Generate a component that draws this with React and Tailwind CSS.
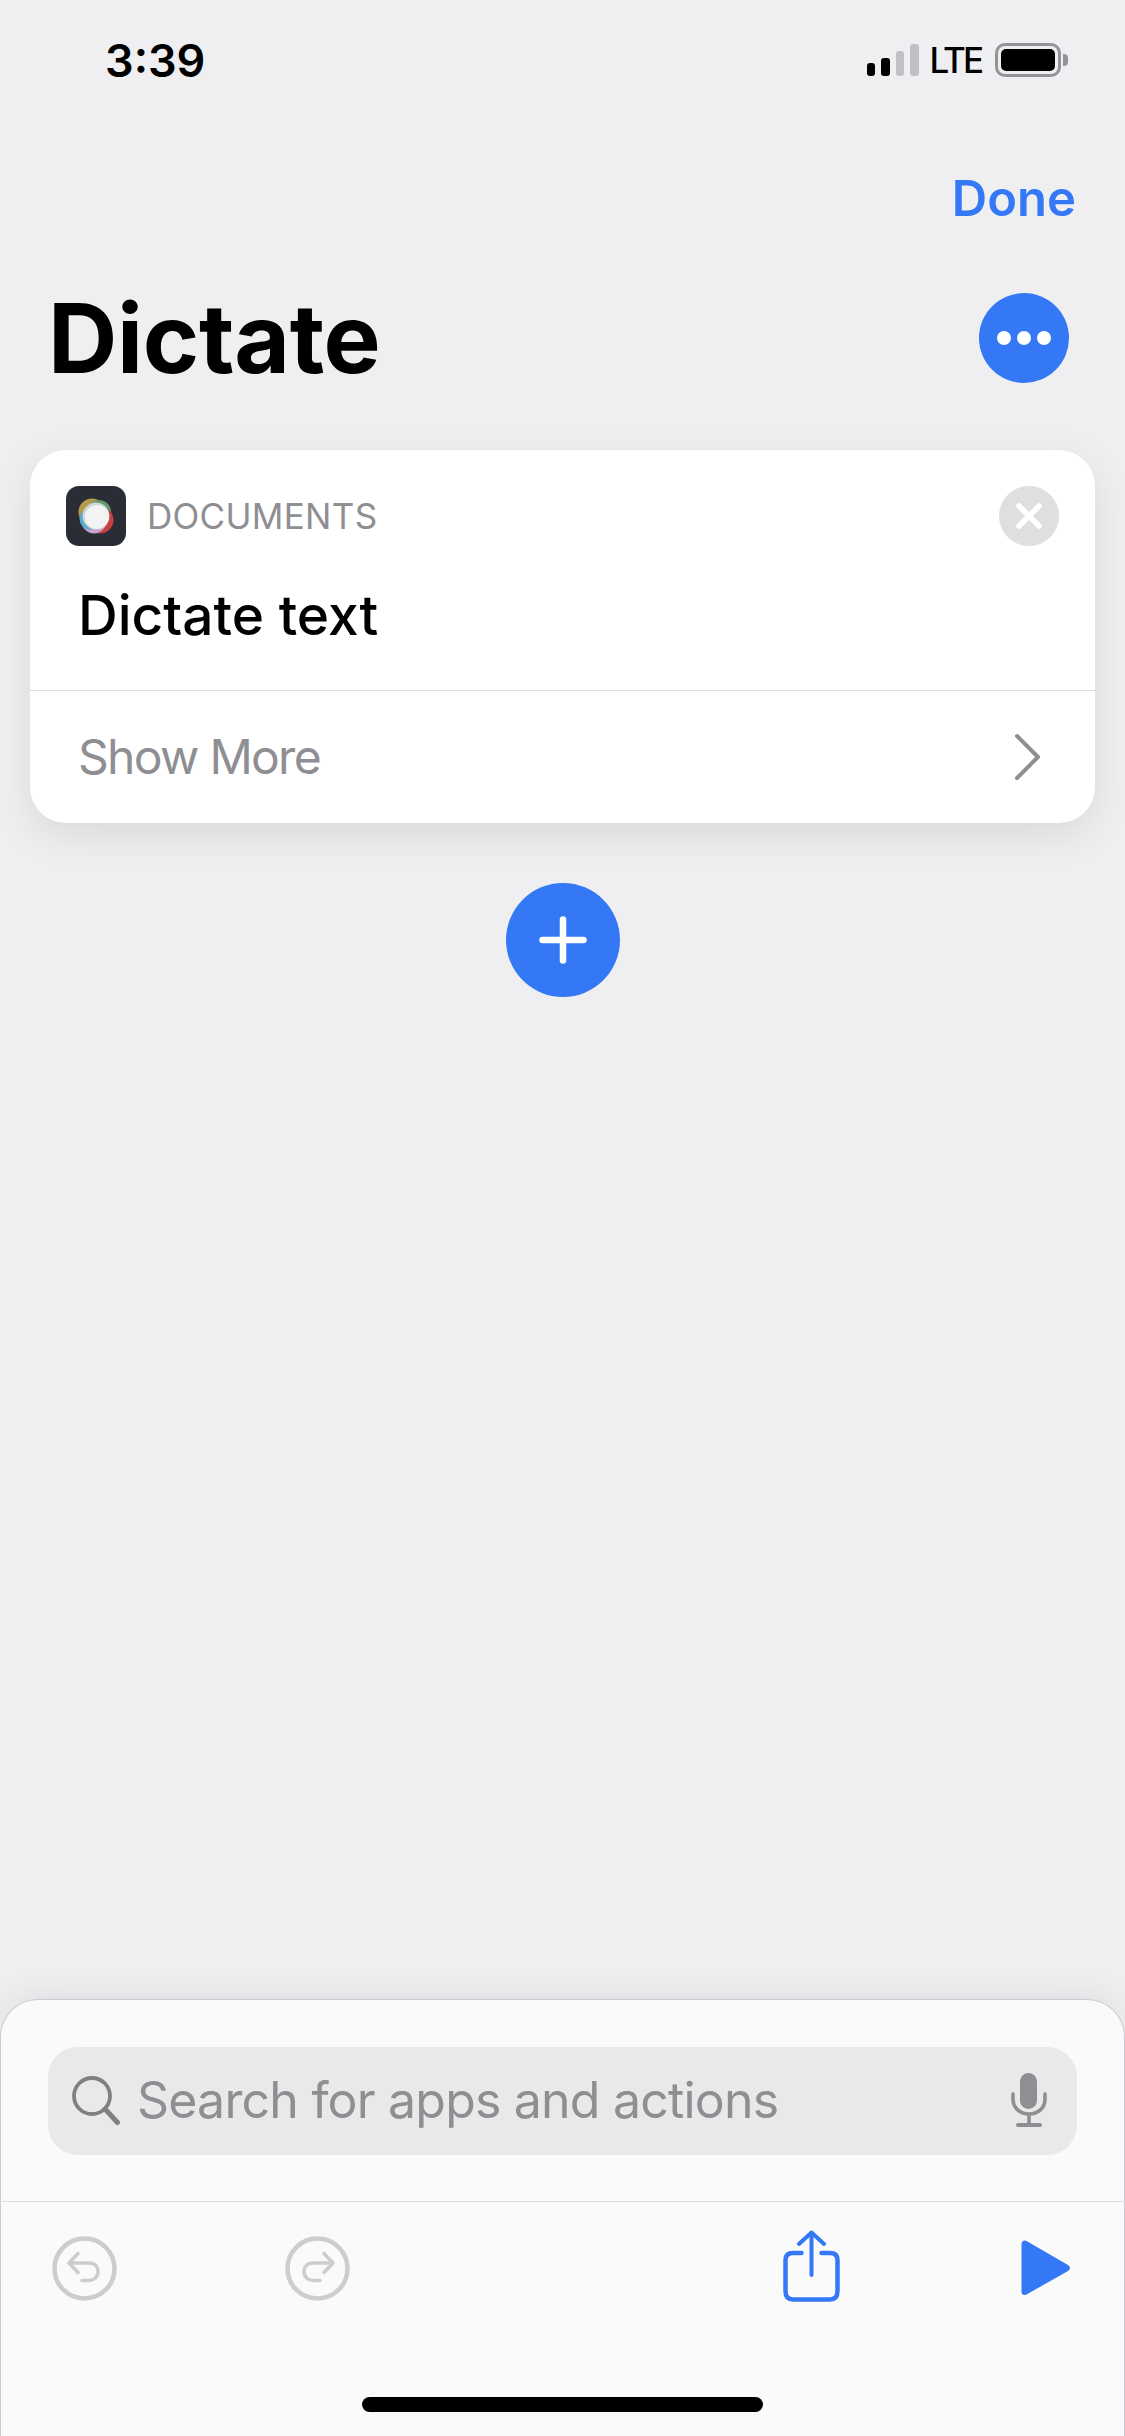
const sans = "font-['Inter','Liberation_Sans',sans-serif]"

function SignalBars() {
  return (
    <div className="flex items-end gap-[6px]">
      <div className="w-[8px] h-[13px] rounded-[3px] bg-black" />
      <div className="w-[9px] h-[18px] rounded-[3px] bg-black" />
      <div className="w-[8px] h-[25px] rounded-[3px] bg-[#c1c1c5]" />
      <div className="w-[9px] h-[32px] rounded-[3px] bg-[#c1c1c5]" />
    </div>
  )
}

function Battery() {
  return (
    <div className="flex items-center gap-[2px]">
      <div className="w-[66px] h-[34px] rounded-[10px] border-[3px] border-[#949498] p-[3px]">
        <div className="w-full h-full rounded-[5px] bg-black" />
      </div>
      <div className="w-[5px] h-[12px] rounded-r-[4px] bg-[#949498]" />
    </div>
  )
}

function DocsLogo() {
  return (
    <div className="w-[60px] h-[60px] rounded-[13px] bg-[#2a2c36] flex items-center justify-center">
      <svg width="36" height="36" viewBox="0 0 36 36" className="blur-[0.4px]">
        <circle cx="14" cy="14" r="13.5" fill="#b59a4e" />
        <circle cx="21" cy="14" r="12" fill="#5f9a6e" />
        <circle cx="22" cy="22" r="13.5" fill="#c8403f" />
        <circle cx="16" cy="23" r="12.5" fill="#c9a3d0" />
        <circle cx="12" cy="21" r="10.5" fill="#5aa7cf" />
        <circle cx="18" cy="18" r="13.5" fill="#cfd9d3" />
        <circle cx="19" cy="19" r="12" fill="#f3f3f3" />
      </svg>
    </div>
  )
}

function HistoryIcon({ flip }) {
  return (
    <svg width="65" height="65" viewBox="0 0 65 65" fill="none" stroke="#cdcdcd" strokeLinecap="round" strokeLinejoin="round" className={flip ? "-scale-x-100" : ""}>
      <circle cx="32.5" cy="32.5" r="30" strokeWidth="4.5" />
      <path d="M26 17.5 L17 27 L26 36.5" strokeWidth="3.6" />
      <path d="M18 27 H37 C43 27 46 31 46 35.5 C46 41 42 44.5 37 44.5 H30" strokeWidth="3.6" />
    </svg>
  )
}

export default function App() {
  return (
    <div className={`w-[1125px] h-[2436px] bg-[#efeff2] flex flex-col overflow-hidden ${sans}`}>
      {/* status bar */}
      <div className="h-[120px] shrink-0 flex items-center justify-between pl-[105px] pr-[57px]">
        <span className="text-[45px] font-semibold text-black leading-none">3:39</span>
        <div className="flex items-center">
          <SignalBars />
          <span className="ml-[11px] mr-[14px] text-[35px] font-medium tracking-[-3px] text-black leading-none">LTE</span>
          <Battery />
        </div>
      </div>

      {/* nav */}
      <div className="h-[156px] shrink-0 flex items-center justify-end pr-[49px]">
        <span className="text-[49px] font-semibold text-[#3478f6] leading-none">Done</span>
      </div>

      {/* title */}
      <div className="mt-[17px] h-[90px] shrink-0 flex items-center justify-between pl-[48px] pr-[56px]">
        <h1 className="text-[96px] tracking-[-0.3px] font-bold text-black leading-none">Dictate</h1>
        <div className="w-[90px] h-[90px] rounded-full bg-[#3478f6] flex items-center justify-center gap-[6px]">
          <div className="w-[14px] h-[14px] rounded-full bg-white" />
          <div className="w-[14px] h-[14px] rounded-full bg-white" />
          <div className="w-[14px] h-[14px] rounded-full bg-white" />
        </div>
      </div>

      {/* action card */}
      <div className="mt-[67px] mx-[30px] h-[373px] shrink-0 bg-white rounded-[36px] shadow-[0_12px_40px_rgba(0,0,0,0.09)] flex flex-col">
        <div className="pt-[36px] px-[36px] flex items-center">
          <DocsLogo />
          <span className="ml-[21px] text-[35px] tracking-[0.3px] text-[#8e8e93] leading-none">DOCUMENTS</span>
          <div className="ml-auto w-[60px] h-[60px] rounded-full bg-[#dfdfe1] flex items-center justify-center">
            <svg width="28" height="28" viewBox="0 0 28 28" fill="none" stroke="white" strokeWidth="5.5" strokeLinecap="round">
              <path d="M4 4 L24 24 M24 4 L4 24" />
            </svg>
          </div>
        </div>
        <div className="h-[144px] pb-[6px] pl-[48px] flex items-center">
          <span className="text-[55px] font-medium text-black leading-none">Dictate text</span>
        </div>
        <div className="flex-1 border-t border-[#dcdcde] pl-[48px] pr-[53px] flex items-center justify-between">
          <span className="text-[48px] tracking-[-1.7px] text-[#8e8e93] leading-none">Show More</span>
          <svg width="29" height="48" viewBox="0 0 29 48" fill="none" stroke="#8e8e93" strokeWidth="4" strokeLinecap="round" strokeLinejoin="round">
            <path d="M4 3 L25 24 L4 45" />
          </svg>
        </div>
      </div>

      {/* add button */}
      <div className="mt-[60px] shrink-0 flex justify-center">
        <div className="w-[114px] h-[114px] rounded-full bg-[#3478f6] flex items-center justify-center">
          <svg width="48" height="48" viewBox="0 0 48 48" stroke="white" strokeWidth="6.5" strokeLinecap="round">
            <path d="M24 3.5 V44.5 M3.5 24 H44.5" />
          </svg>
        </div>
      </div>

      <div className="flex-1" />

      {/* bottom sheet */}
      <div className="h-[437px] shrink-0 bg-[#fafafa] rounded-t-[38px] border-t border-x border-[#cbcbcf] shadow-[0_-8px_30px_rgba(0,0,0,0.06)] flex flex-col">
        <div className="pt-[47px] px-[47px] pb-[46px]">
          <div className="h-[108px] rounded-[30px] bg-[#e9e9ea] flex items-center pl-[24px] pr-[30px]">
            <svg width="48" height="50" viewBox="0 0 48 50" fill="none" stroke="#808084" strokeLinecap="round" className="shrink-0">
              <circle cx="20" cy="20" r="18" strokeWidth="3.8" />
              <path d="M33 33 L45.5 46.5" strokeWidth="5" />
            </svg>
            <span className="ml-[17px] mb-[2px] text-[50px] tracking-[-0.8px] text-[#8e8e93] leading-none">Search for apps and actions</span>
            <svg width="36" height="56" viewBox="0 0 36 56" className="ml-auto">
              <rect x="9" y="0" width="17" height="36" rx="8.5" fill="#8e8e93" />
              <path d="M2 21 V26 C2 35 9 41 18 41 C27 41 34 35 34 26 V21" fill="none" stroke="#8e8e93" strokeWidth="3.6" strokeLinecap="round" />
              <path d="M18 41 V52" stroke="#8e8e93" strokeWidth="3.6" />
              <rect x="5" y="50" width="26" height="4" rx="2" fill="#8e8e93" />
            </svg>
          </div>
        </div>

        {/* toolbar */}
        <div className="-mx-px border-t border-[#dcdcde] pt-[28px] pl-[52px] pr-[55px] flex items-start h-[101px]">
          <div className="mt-[6px]">
            <HistoryIcon />
          </div>
          <div className="mt-[6px] ml-[168px]">
            <HistoryIcon flip />
          </div>
          <svg width="57" height="72" viewBox="0 0 57 72" fill="none" stroke="#3478f6" strokeWidth="4.5" strokeLinecap="round" strokeLinejoin="round" className="ml-auto">
            <path d="M18.5 23 H10 C5 23 2.5 25.5 2.5 30 V61 C2.5 66.5 5 69.5 10 69.5 H47 C52 69.5 54.5 66.5 54.5 61 V30 C54.5 25.5 52 23 47 23 H38.5" />
            <path d="M28.5 3 V45" strokeWidth="4" />
            <path d="M16 14 L28.5 2.5 L41 14" strokeWidth="4" />
          </svg>
          <svg width="49" height="56" viewBox="0 0 49 56" className="mt-[10px] ml-[181px]">
            <path d="M4 0.5 C2 0.5 0.5 2 0.5 4 V52 C0.5 54.5 3 56 5.5 54.5 L47 31 C49.5 29.5 49.5 26.5 47 25 L5.5 1 C5 0.7 4.5 0.5 4 0.5 Z" fill="#3478f6" />
          </svg>
        </div>

        <div className="mt-auto mb-[24px] self-center w-[401px] h-[15px] rounded-full bg-black" />
      </div>
    </div>
  )
}
